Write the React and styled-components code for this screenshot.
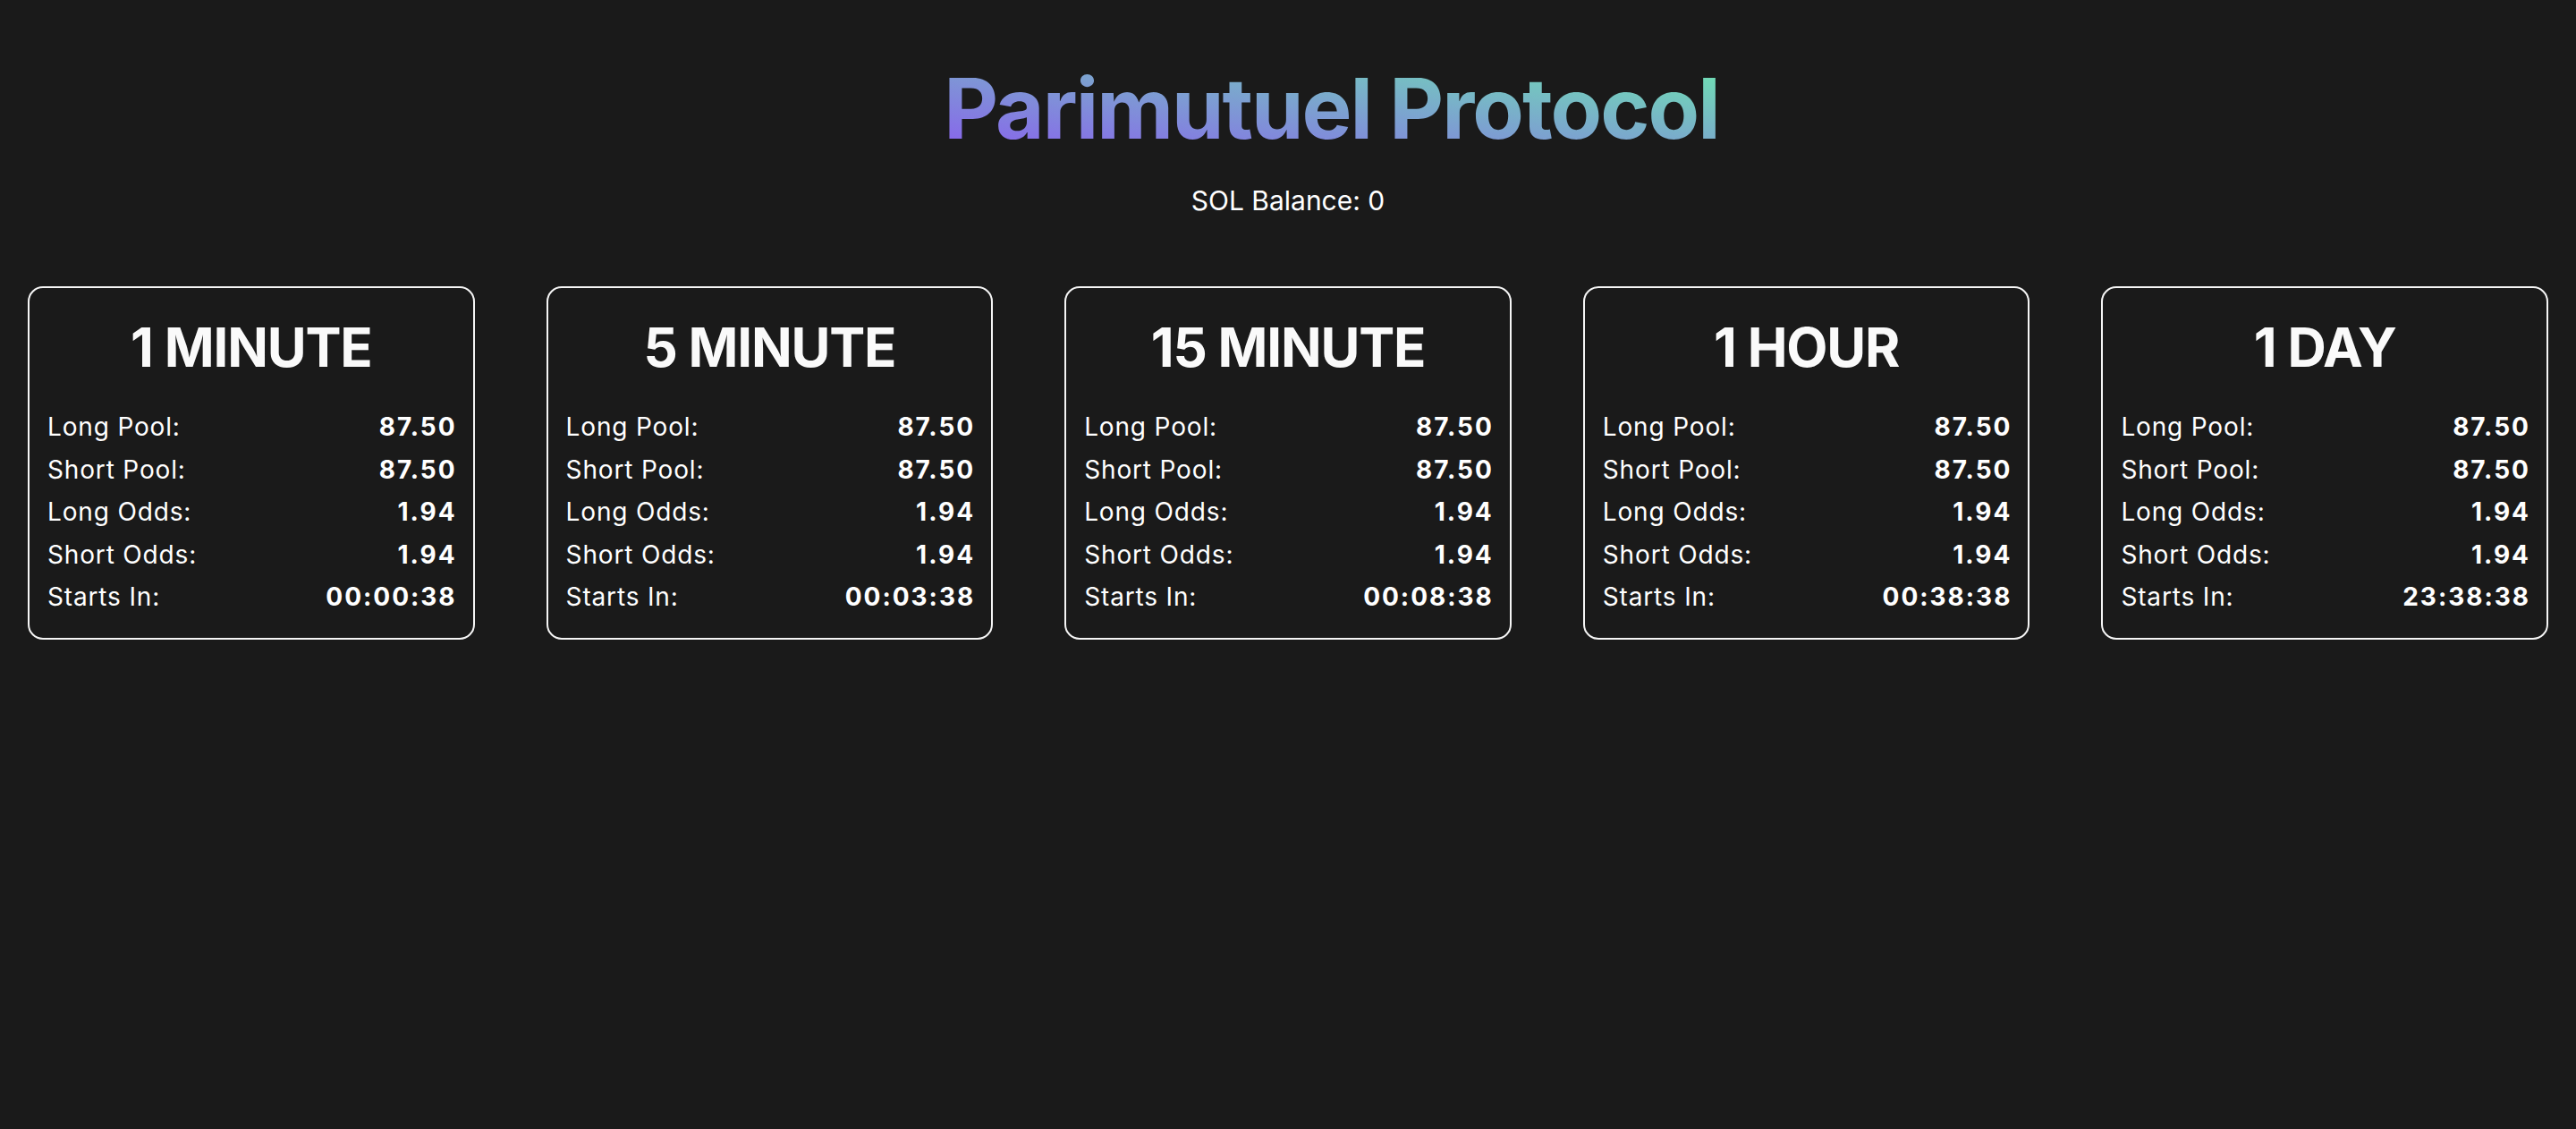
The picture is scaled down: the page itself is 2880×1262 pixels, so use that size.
import React from "react";
import styled, { createGlobalStyle } from "styled-components";

const GlobalStyle = createGlobalStyle`
  html, body {
    margin: 0;
    padding: 0;
    background: #1a1a1a;
    color: #ffffff;
    font-family: Inter, "Noto Sans", "Liberation Sans", sans-serif;
  }
  * { box-sizing: border-box; }
`;

const Page = styled.main`
  min-height: 1262px;
  background: #1a1a1a;
  padding: 65px 31px 0;
  display: flex;
  flex-direction: column;
  align-items: center;
`;

const Title = styled.h1`
  margin: 0 0 0 97px;
  display: inline-block;
  font-size: 94px;
  line-height: 113px;
  font-weight: 700;
  letter-spacing: -0.021em;
  background: linear-gradient(to top right, #8a5cf0, #6ee7b0);
  -webkit-background-clip: text;
  background-clip: text;
  color: transparent;
`;

const Balance = styled.p`
  margin: 23px 0 0;
  font-size: 30px;
  line-height: 46px;
  font-weight: 400;
  color: #ffffff;
`;

const Grid = styled.section`
  align-self: stretch;
  margin-top: 73px;
  display: grid;
  grid-template-columns: repeat(5, 1fr);
  gap: 80px;
`;

const Card = styled.article`
  border: 2px solid #f5f5f5;
  border-radius: 17px;
  padding: 22px 20px 21px;
  display: flex;
  flex-direction: column;
`;

const CardTitle = styled.h2`
  margin: 0 0 22px;
  text-align: center;
  font-size: 60px;
  line-height: 88px;
  font-weight: 700;
  letter-spacing: -0.02em;
  color: #fafafa;
`;

const Row = styled.div`
  display: flex;
  justify-content: space-between;
  align-items: baseline;
  font-size: 28px;
  line-height: 47.5px;
`;

const Label = styled.span`
  font-weight: 400;
  letter-spacing: 0.03em;
  color: #ffffff;
`;

const Value = styled.span`
  font-weight: 700;
  letter-spacing: 0.07em;
  margin-right: -0.07em;
  color: #ffffff;
`;

const markets = [
  { name: "1 MINUTE", starts: "00:00:38" },
  { name: "5 MINUTE", starts: "00:03:38" },
  { name: "15 MINUTE", starts: "00:08:38" },
  { name: "1 HOUR", starts: "00:38:38" },
  { name: "1 DAY", starts: "23:38:38" },
];

export default function App() {
  return (
    <>
      <GlobalStyle />
      <Page>
        <Title>Parimutuel Protocol</Title>
        <Balance>SOL Balance: 0</Balance>
        <Grid>
          {markets.map((m) => (
            <Card key={m.name}>
              <CardTitle>{m.name}</CardTitle>
              <Row><Label>Long Pool:</Label><Value>87.50</Value></Row>
              <Row><Label>Short Pool:</Label><Value>87.50</Value></Row>
              <Row><Label>Long Odds:</Label><Value>1.94</Value></Row>
              <Row><Label>Short Odds:</Label><Value>1.94</Value></Row>
              <Row><Label>Starts In:</Label><Value>{m.starts}</Value></Row>
            </Card>
          ))}
        </Grid>
      </Page>
    </>
  );
}
